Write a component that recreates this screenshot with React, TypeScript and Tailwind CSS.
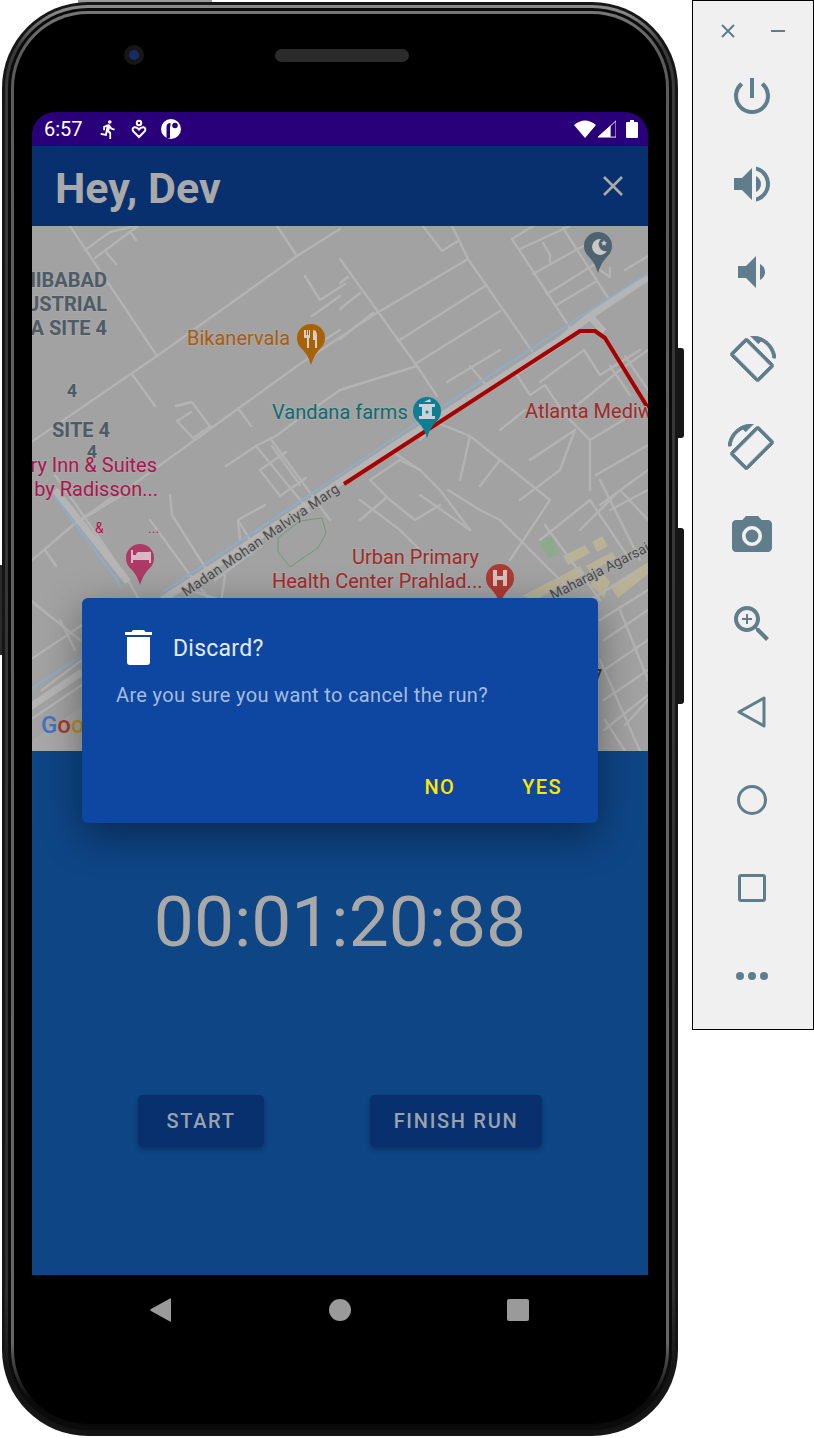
import React from "react";

const minor: string[] = [
  "70,226 157,356", "132,374 155,406", "30,443 157,356 297,256 340,229", "127,489 297,366 372,316 468,259",
  "85,250 110,232 135,226", "95,258 138,226", "105,251 116,264", "130,232 136,240",
  "277,226 297,256", "176,406 192,402 211,428", "191,412 177,421 193,438 211,426", "238,408 251,426",
  "226,466 256,446 276,436 300,418", "256,446 310,512", "270,438 330,520", "286,452 260,470 280,496 306,478",
  "272,446 300,485", "300,418 340,390 417,366", "340,259 417,366 437,396", "423,226 442,251 458,241",
  "452,226 468,259 532,351", "398,341 485,286", "415,364 500,311", "340,339 373,313", "340,309 360,293", "340,283 348,277",
  "305,276 320,300 345,284", "312,316 340,296", "318,344 340,330", "512,239 570,328", "512,239 533,226", "563,228 610,301",
  "520,249 570,226", "533,274 583,246", "547,294 595,264", "555,306 597,281", "543,243 550,255 550,262",
  "600,270 610,277 610,268", "625,270 648,256", "447,382 500,350", "470,366 490,390", "430,420 470,436 500,460 480,486",
  "490,384 515,372 530,395 545,385 565,415 590,440 590,490", "520,372 560,346", "540,382 584,350 600,375 640,350",
  "565,415 620,370 648,350", "610,366 630,395", "625,356 648,390", "590,440 648,405", "596,475 648,445", "600,505 648,470",
  "500,430 525,410", "470,436 460,480", "500,460 550,500 510,560", "530,460 575,430 560,470",
  "440,420 420,440", "400,460 420,470 440,490 470,530", "400,460 370,480 390,500 415,520 440,505", "420,470 390,450",
  "448,490 480,510 500,520", "360,500 400,530 430,560", "420,495 470,530", "386,498 360,520",
  "500,520 540,560 570,590", "520,500 560,470", "540,540 590,500 630,560", "580,530 620,490 648,520",
  "600,480 640,560", "545,525 600,600", "590,600 640,570", "610,510 648,490",
  "55,475 125,575 145,610", "73,525 130,490", "30,562 73,525 113,497", "45,550 56,566", "150,520 190,575 210,600",
  "170,495 172,515 210,575", "240,540 238,520 265,505", "215,580 262,545", "238,520 250,540", "190,590 250,610", "225,575 220,610",
  "30,600 80,640", "60,620 75,650", "30,660 82,625", "30,720 82,685 ", "42,690 82,660",
  "600,620 648,590", "604,640 648,610", "604,670 648,640", "604,700 648,670", "604,730 648,695", "620,610 648,680", "600,660 640,751",
  "605,720 625,751", "625,725 648,700",
];

const majorRoads: string[] = [
  "340,482 400,442 560,340 590,316 648,277", "30,707 82,672", "162,600 230,556 340,482", "55,490 128,582",
  "590,316 604,332",
];

const beige: string[] = [
  "610,586 648,562 648,574 618,598", "522,596 580,566 585,574 535,600", "563,556 585,545 590,553 568,565",
  "592,542 602,536 608,546 597,552", "586,566 612,552 616,558 590,572", "590,585 600,570 610,582 604,598",
];

const Pin = ({ x, y, fill }: { x: number; y: number; fill: string }) => (
  <path d={`M${x} ${y - 14}a14 14 0 0 1 14 14c0 6-3 9-6 12-3 3-6 8-8 15-2-7-5-12-8-15-3-3-6-6-6-12a14 14 0 0 1 14-14z`} fill={fill} />
);

const Label = ({ x, y, fill, size = 20, weight = 400, anchor = "start", children }: { x: number; y: number; fill: string; size?: number; weight?: number; anchor?: "start" | "end" | "middle"; children: React.ReactNode }) => (
  <text x={x} y={y} fill={fill} fontSize={size} fontWeight={weight} textAnchor={anchor} fontFamily="Roboto, sans-serif" stroke="#a8a8a8" strokeWidth={2} paintOrder="stroke">
    {children}
  </text>
);

const MapDrawing = () => (
  <svg viewBox="32 226 616 525" className="block h-full w-full">
    <rect x="32" y="226" width="616" height="525" fill="#a2a2a2" />
    <polygon points="32,740 140,668 180,690 82,751 32,751" fill="#a8a8a8" />
    {beige.map((p) => (
      <polygon key={p} points={p} fill="#b9b296" />
    ))}
    <polygon points="538,540 552,537 560,555 548,558" fill="#8fa98c" />
    {minor.map((p) => (
      <polyline key={p} points={p} fill="none" stroke="#b3b3b3" strokeWidth="2.4" strokeLinejoin="round" strokeLinecap="round" />
    ))}
    {majorRoads.map((p) => (
      <polyline key={p} points={p} fill="none" stroke="#b5b5b5" strokeWidth="7" strokeLinejoin="round" />
    ))}
    <polyline points="30,690 82,655" fill="none" stroke="#8fadc7" strokeWidth="2" />
    <polyline points="163,592 317,490 400,434 600,304 648,273" fill="none" stroke="#8fadc7" strokeWidth="2" />
    <polyline points="55,497 117,580 122,590" fill="none" stroke="#8fadc7" strokeWidth="2" />
    <polyline points="278,538 300,521 322,518 326,533 318,548 306,556 290,567 278,552 278,538" fill="none" stroke="#6f9a78" strokeWidth="1" />
    <polyline points="344,484 580,331 595,331 605,338 648,408" fill="none" stroke="#a80000" strokeWidth="4" strokeLinejoin="round" />
    <Pin x={311} y={338} fill="#a8620a" />
    <Pin x={427} y={411} fill="#0c7f92" />
    <Pin x={598} y={246} fill="#4f6270" />
    <Pin x={140} y={558} fill="#ad3a66" />
    <Pin x={500} y={578} fill="#ad3a33" />
    <path d="M304 330v8h3v10h2v-10h1v-8h-1v5h-1v-5h-1v5h-1v-5h-2zM314 330c2 0 3 3 3 7v11h-2v-8h-2v-5c0-3 0-5 1-5z" fill="#d6d0c4" />
    <path d="M419 404h16v3h-3v9h3v3h-16v-3h3v-9h-3zM424 402l6-3 1 3z" fill="#c7d3d6" />
    <circle cx="427" cy="412" r="1.500" fill="#0c7f92" />
    <path d="M601 239a8 8 0 1 0 6 12 7 7 0 0 1-6-12z" fill="#c8c8c8" />
    <path d="M604 240l1 2 2 .2-1.500 1.500.5 2-2-1-2 1 .5-2-1.500-1.500 2-.2z" fill="#c8c8c8" />
    <path d="M131 550h2v5h3a3 3 0 0 1 3-3h9a3 3 0 0 1 3 0v11h-2v-3h-16v3h-2z" fill="#d9b7c4" />
    <path d="M493 570h4v6h6v-6h4v16h-4v-6h-6v6h-4z" fill="#d8c0bc" />
    <Label x={107} y={287} fill="#4f5b66" weight={700} anchor="end">SAHIBABAD</Label>
    <Label x={107} y={311} fill="#4f5b66" weight={700} anchor="end">INDUSTRIAL</Label>
    <Label x={107} y={335} fill="#4f5b66" weight={700} anchor="end">AREA SITE 4</Label>
    <Label x={72} y={397} fill="#4f5b66" size={18} weight={700} anchor="middle">4</Label>
    <Label x={52} y={437} fill="#4f5b66" weight={700}>SITE 4</Label>
    <Label x={92} y={458} fill="#4f5b66" size={18} weight={700} anchor="middle">4</Label>
    <Label x={157} y={472} fill="#ad1550" anchor="end">Country Inn &amp; Suites</Label>
    <Label x={158} y={496} fill="#ad1550" anchor="end">by Radisson...</Label>
    <Label x={95} y={533} fill="#ad1550" size={14}>&amp;</Label>
    <Label x={148} y={533} fill="#ad1550" size={14}>...</Label>
    <Label x={187} y={345} fill="#a85c10">Bikanervala</Label>
    <Label x={272} y={419} fill="#0f6b70">Vandana farms</Label>
    <Label x={525} y={418} fill="#a12a2a">Atlanta Mediworld</Label>
    <Label x={352} y={564} fill="#a12a2a">Urban Primary</Label>
    <Label x={272} y={588} fill="#a12a2a">Health Center Prahlad...</Label>
    <g transform="translate(186,597) rotate(-34.500)">
      <text x="0" y="0" fill="#4a4a4a" fontSize="14" fontFamily="Roboto, sans-serif" letterSpacing="0.45" stroke="#a8a8a8" strokeWidth={2} paintOrder="stroke">Madan Mohan Malviya Marg</text>
    </g>
    <g transform="translate(553,600) rotate(-27)">
      <text x="0" y="0" fill="#4a4a4a" fontSize="14" fontFamily="Roboto, sans-serif" stroke="#a8a8a8" strokeWidth={2} paintOrder="stroke">Maharaja Agarsain</text>
    </g>
    <text x="594" y="680" fill="#333" fontSize="14" fontFamily="Roboto, sans-serif" fontWeight="700">7</text>
    <text x="41" y="733" fontSize="24" fontWeight="500" fontFamily="Roboto, sans-serif">
      <tspan fill="#3f74c4">G</tspan>
      <tspan fill="#a93a2e">o</tspan>
      <tspan fill="#b78f20">o</tspan>
    </text>
  </svg>
);

const SideIcon = ({ d, flip, heavy, extra }: { d: string; flip?: boolean; heavy?: boolean; extra?: React.ReactNode }) => {
  const base = heavy ? "h-12 w-12 fill-[#607d8b] stroke-[#607d8b] stroke-[0.5]" : "h-12 w-12 fill-[#607d8b]";
  return (
    <svg viewBox="0 0 24 24" className={flip ? `${base} -scale-x-100` : base}>
      <path d={d} />
      {extra}
    </svg>
  );
};

const rotate = "M16.480 2.520c3.270 1.550 5.610 4.720 5.970 8.480h1.500C23.440 4.840 18.290 0 12 0l-.66.030 3.810 3.810 1.330-1.320zm-6.250-.77c-.59-.59-1.540-.59-2.120 0L1.750 8.110c-.59.59-.59 1.540 0 2.120l12.020 12.020c.59.59 1.540.59 2.120 0l6.360-6.360c.59-.59.59-1.540 0-2.120L10.230 1.750zm4.600 19.440L2.810 9.170l6.360-6.360 12.020 12.020-6.360 6.360z";

const EmulatorPanel = () => (
  <aside className="ml-[14px] flex h-[1030px] w-[122px] flex-col items-center border border-black bg-[#f0f0f0]">
    <div className="flex h-[50px] w-full items-center justify-between pl-[27px] pr-[27px] pt-[9px]">
      <svg viewBox="0 0 16 16" className="h-4 w-4 stroke-[#607d8b] stroke-2"><path d="M2 2l12 12M14 2L2 14" /></svg>
      <svg viewBox="0 0 16 16" className="h-4 w-4 stroke-[#607d8b] stroke-2"><path d="M1 8h14" /></svg>
    </div>
    <div className="flex flex-col items-center gap-[40px] pr-[2px] pt-[21px]">
      <SideIcon d="M13 3h-2v10h2V3zm4.830 2.170l-1.420 1.420C17.990 7.860 19 9.810 19 12c0 3.870-3.130 7-7 7s-7-3.130-7-7c0-2.190 1.010-4.140 2.580-5.420L6.170 5.170C4.230 6.820 3 9.260 3 12c0 4.970 4.030 9 9 9s9-4.030 9-9c0-2.740-1.230-5.180-3.170-6.830z" />
      <SideIcon d="M3 9v6h4l5 5V4L7 9H3zm13.500 3c0-1.770-1.020-3.290-2.500-4.030v8.050c1.480-.73 2.500-2.250 2.500-4.020zM14 3.230v2.060c2.890.86 5 3.540 5 6.710s-2.110 5.850-5 6.710v2.060c4.010-.91 7-4.490 7-8.770s-2.990-7.860-7-8.770z" />
      <SideIcon d="M18.500 12c0-1.770-1.020-3.290-2.500-4.030v8.050c1.480-.73 2.500-2.250 2.500-4.020zM5 9v6h4l5 5V4L9 9H5z" />
      <SideIcon d={rotate} heavy />
      <SideIcon d={rotate} flip heavy />
      <SideIcon d="M9 2 7.170 4H4c-1.100 0-2 .9-2 2v12c0 1.100.9 2 2 2h16c1.100 0 2-.9 2-2V6c0-1.100-.9-2-2-2h-3.170L15 2H9zm3 15c-2.760 0-5-2.240-5-5s2.240-5 5-5 5 2.240 5 5-2.240 5-5 5z" extra={<circle cx="12" cy="12" r="3.200" />} />
      <SideIcon d="M15.500 14h-.79l-.28-.27C15.410 12.590 16 11.110 16 9.500 16 5.910 13.090 3 9.500 3S3 5.910 3 9.500 5.910 16 9.500 16c1.610 0 3.090-.59 4.230-1.570l.27.28v.79l5 4.990L20.490 19l-4.990-5zm-6 0C7.010 14 5 11.990 5 9.500S7.010 5 9.500 5 14 7.010 14 9.500 11.990 14 9.500 14zm2.500-4h-2v2H9v-2H7V9h2V7h1v2h2v1z" />
      <svg viewBox="0 0 48 48" className="h-12 w-12 fill-none stroke-[#607d8b] stroke-[3] [stroke-linejoin:round]"><path d="M36 10v28L11 24z" /></svg>
      <svg viewBox="0 0 48 48" className="h-12 w-12 fill-none stroke-[#607d8b] stroke-[3]"><circle cx="24" cy="24" r="13.500" /></svg>
      <svg viewBox="0 0 48 48" className="h-12 w-12 fill-none stroke-[#607d8b] stroke-[3]"><rect x="11.500" y="11.500" width="25" height="25" rx="1.500" /></svg>
      <svg viewBox="0 0 48 48" className="h-12 w-12 fill-[#607d8b]"><circle cx="12" cy="24" r="4" /><circle cx="24" cy="24" r="4" /><circle cx="36" cy="24" r="4" /></svg>
    </div>
  </aside>
);

const StatusBar = () => (
  <div className="flex h-[34px] items-center justify-between rounded-t-[23px] bg-[#2a007a] pl-[12px] pr-[10px] text-white">
    <div className="flex items-center">
      <span className="text-[20px] leading-none">6:57</span>
      <svg viewBox="0 0 24 24" className="ml-[15px] h-[21px] w-[21px] fill-white"><path d="M13.490 5.480c1.100 0 2-.9 2-2s-.9-2-2-2-2 .9-2 2 .9 2 2 2zm-3.600 13.900l1-4.400 2.100 2v6h2v-7.500l-2.100-2 .6-3c1.300 1.500 3.300 2.500 5.500 2.500v-2c-1.900 0-3.500-1-4.300-2.400l-1-1.600c-.4-.6-1-1-1.700-1-.3 0-.5.1-.8.1l-5.200 2.200v4.700h2v-3.400l1.800-.7-1.600 8.100-4.900-1-.4 2 7 1.400z" /></svg>
      <svg viewBox="0 0 16 20" className="ml-[12px] h-[20px] w-[16px] fill-none stroke-white stroke-2"><circle cx="8" cy="4" r="2.200" /><path d="M8 18L2.500 12.500C1 11 1.500 8.500 3.500 8.200 5.500 8 7 9 8 10.500 9 9 10.500 8 12.500 8.200 14.500 8.500 15 11 13.500 12.500z" /></svg>
      <svg viewBox="0 0 20 20" className="ml-[14px] h-[20px] w-[20px]"><circle cx="10" cy="10" r="10" fill="#fff" /><path d="M5.500 19V8a4 4 0 0 1 4-4v3a1 1 0 0 0-.5 1v11z" fill="#2a007a" /><circle cx="14" cy="6.500" r="2.800" fill="#2a007a" /></svg>
    </div>
    <div className="flex items-center">
      <svg viewBox="0 0 22 18" className="h-[18px] w-[22px] fill-white"><path d="M0 5Q11-4 22 5L11 18z" /></svg>
      <svg viewBox="0 0 20 18" className="ml-[2px] h-[18px] w-[18px]"><path d="M0 18L20 0v18z" fill="none" stroke="#fff" strokeWidth="1" /><path d="M0 18L14 5v13z" fill="#fff" /></svg>
      <svg viewBox="0 0 12 18" className="ml-[10px] h-[18px] w-[12px] fill-white"><path d="M4 0h4v2h3a1 1 0 0 1 1 1v14a1 1 0 0 1-1 1H1a1 1 0 0 1-1-1V3a1 1 0 0 1 1-1h3z" /></svg>
    </div>
  </div>
);

const Dialog = () => (
  <div className="absolute left-[50px] top-[486px] h-[225px] w-[516px] rounded-[6px] bg-[#0d47a1] shadow-[0_12px_40px_rgba(0,0,0,0.4)]">
    <div className="flex items-center pl-[43px] pt-[32px]">
      <svg viewBox="0 0 27 35" className="h-[35px] w-[27px] fill-white"><path d="M8 0h11l1.500 2H27v3H0V2h6.500zM2 7h23v25a3 3 0 0 1-3 3H5a3 3 0 0 1-3-3z" /></svg>
      <span className="ml-[21px] pt-[2px] text-[23px] leading-none tracking-[0.25px] text-[#e3eaf5]">Discard?</span>
    </div>
    <p className="pl-[34px] pt-[18px] text-[20px] leading-[24px] tracking-[0.35px] text-[#a5bcdf]">Are you sure you want to cancel the run?</p>
    <div className="absolute bottom-[24px] right-[36px] flex gap-[67px] text-[20px] font-medium leading-6 tracking-[1.400px] text-[#ffe600]">
      <span>NO</span>
      <span>YES</span>
    </div>
  </div>
);

const Navbar = () => (
  <div className="relative flex h-[70px] items-center bg-black pl-[118px]">
    <svg viewBox="0 0 22 24" className="h-6 w-[22px] fill-[#9a9a9a]"><path d="M21 1v22c0 1-.5 1-1 .6L1 13c-1-.6-1-1.400 0-2L20 .5c.5-.3 1-.2 1 .5z" /></svg>
    <div className="ml-[157px] h-[22px] w-[22px] rounded-full bg-[#9a9a9a]" />
    <div className="ml-[156px] h-[22px] w-[22px] rounded-[2px] bg-[#9a9a9a]" />
  </div>
);

const Screen = () => (
  <div className="relative w-[616px]">
    <StatusBar />
    <div className="flex h-[80px] items-center justify-between bg-[#082f6e] pl-[23px] pr-[25px] text-[#a9a9a9]">
      <h1 className="pt-[4px] text-[43px] font-bold leading-none">Hey, Dev</h1>
      <svg viewBox="0 0 20 20" className="h-[20px] w-[20px] stroke-[#a9a9a9] stroke-[2.600]"><path d="M1 1l18 18M19 1L1 19" /></svg>
    </div>
    <div className="h-[525px] overflow-hidden">
      <MapDrawing />
    </div>
    <div className="flex h-[524px] flex-col items-center bg-[#0e4585]">
      <div className="pt-[125px] text-[71.300px] leading-[92px] text-[#a9a9a9]">00:01:20:88</div>
      <div className="flex gap-[106px] pt-[127px] text-[20px] font-medium tracking-[1.700px] text-[#98a3af]">
        <div className="flex h-[52px] w-[126px] items-center justify-center rounded-[5px] bg-[#082f6e] shadow-[0_3px_5px_rgba(0,0,0,0.25)]">START</div>
        <div className="flex h-[52px] w-[172px] items-center justify-center rounded-[5px] bg-[#082f6e] shadow-[0_3px_5px_rgba(0,0,0,0.25)]">FINISH RUN</div>
      </div>
    </div>
    <Navbar />
    <Dialog />
  </div>
);

const Phone = () => (
  <div className="relative ml-[2px] mt-[2px] h-[1434px] w-[676px] shrink-0">
    <div className="absolute -right-[6px] top-[346px] h-[90px] w-[8px] rounded-r-[3px] bg-[#161616]" />
    <div className="absolute -right-[6px] top-[526px] h-[176px] w-[8px] rounded-r-[3px] bg-[#161616]" />
    <div className="absolute -left-[2px] top-[563px] h-[90px] w-[4px] bg-[#2a2a2a]" />
    <div className="absolute -top-[2px] left-[76px] h-[4px] w-[134px] bg-[#9a9a9a]" />
    <div className="relative h-full rounded-[86px] bg-[#161616] p-[3px]">
      <div className="h-full rounded-[83px] bg-[linear-gradient(to_bottom,#8a8a8a,#8a8a8a_0.500%,#3a3a3a_3%,#303030_90%,#141414_96%)] p-[3px]">
        <div className="h-full rounded-[80px] bg-[#0b0b0b] p-[3px]">
          <div className="h-full rounded-[77px] bg-[linear-gradient(to_bottom,#777,#5c5c5c_3%,#666_94%,#0a0a0a_98%)] p-[3px]">
            <div className="relative h-full rounded-[74px] bg-black pl-[18px] pr-[18px] pt-[98px]">
              <div className="absolute left-[110px] top-[31px] h-[20px] w-[20px] rounded-full bg-[#161616] p-[5px]">
                <div className="h-full w-full rounded-full bg-[#1a2a66]" />
              </div>
              <div className="absolute left-[261px] top-[35px] h-[13px] w-[134px] rounded-full bg-[#2b2b2b]" />
              <Screen />
            </div>
          </div>
        </div>
      </div>
    </div>
  </div>
);

export default function App() {
  return (
    <div className="flex h-[1438px] w-[814px] items-start overflow-hidden bg-white [font-family:Roboto,sans-serif]">
      <Phone />
      <EmulatorPanel />
    </div>
  );
}
